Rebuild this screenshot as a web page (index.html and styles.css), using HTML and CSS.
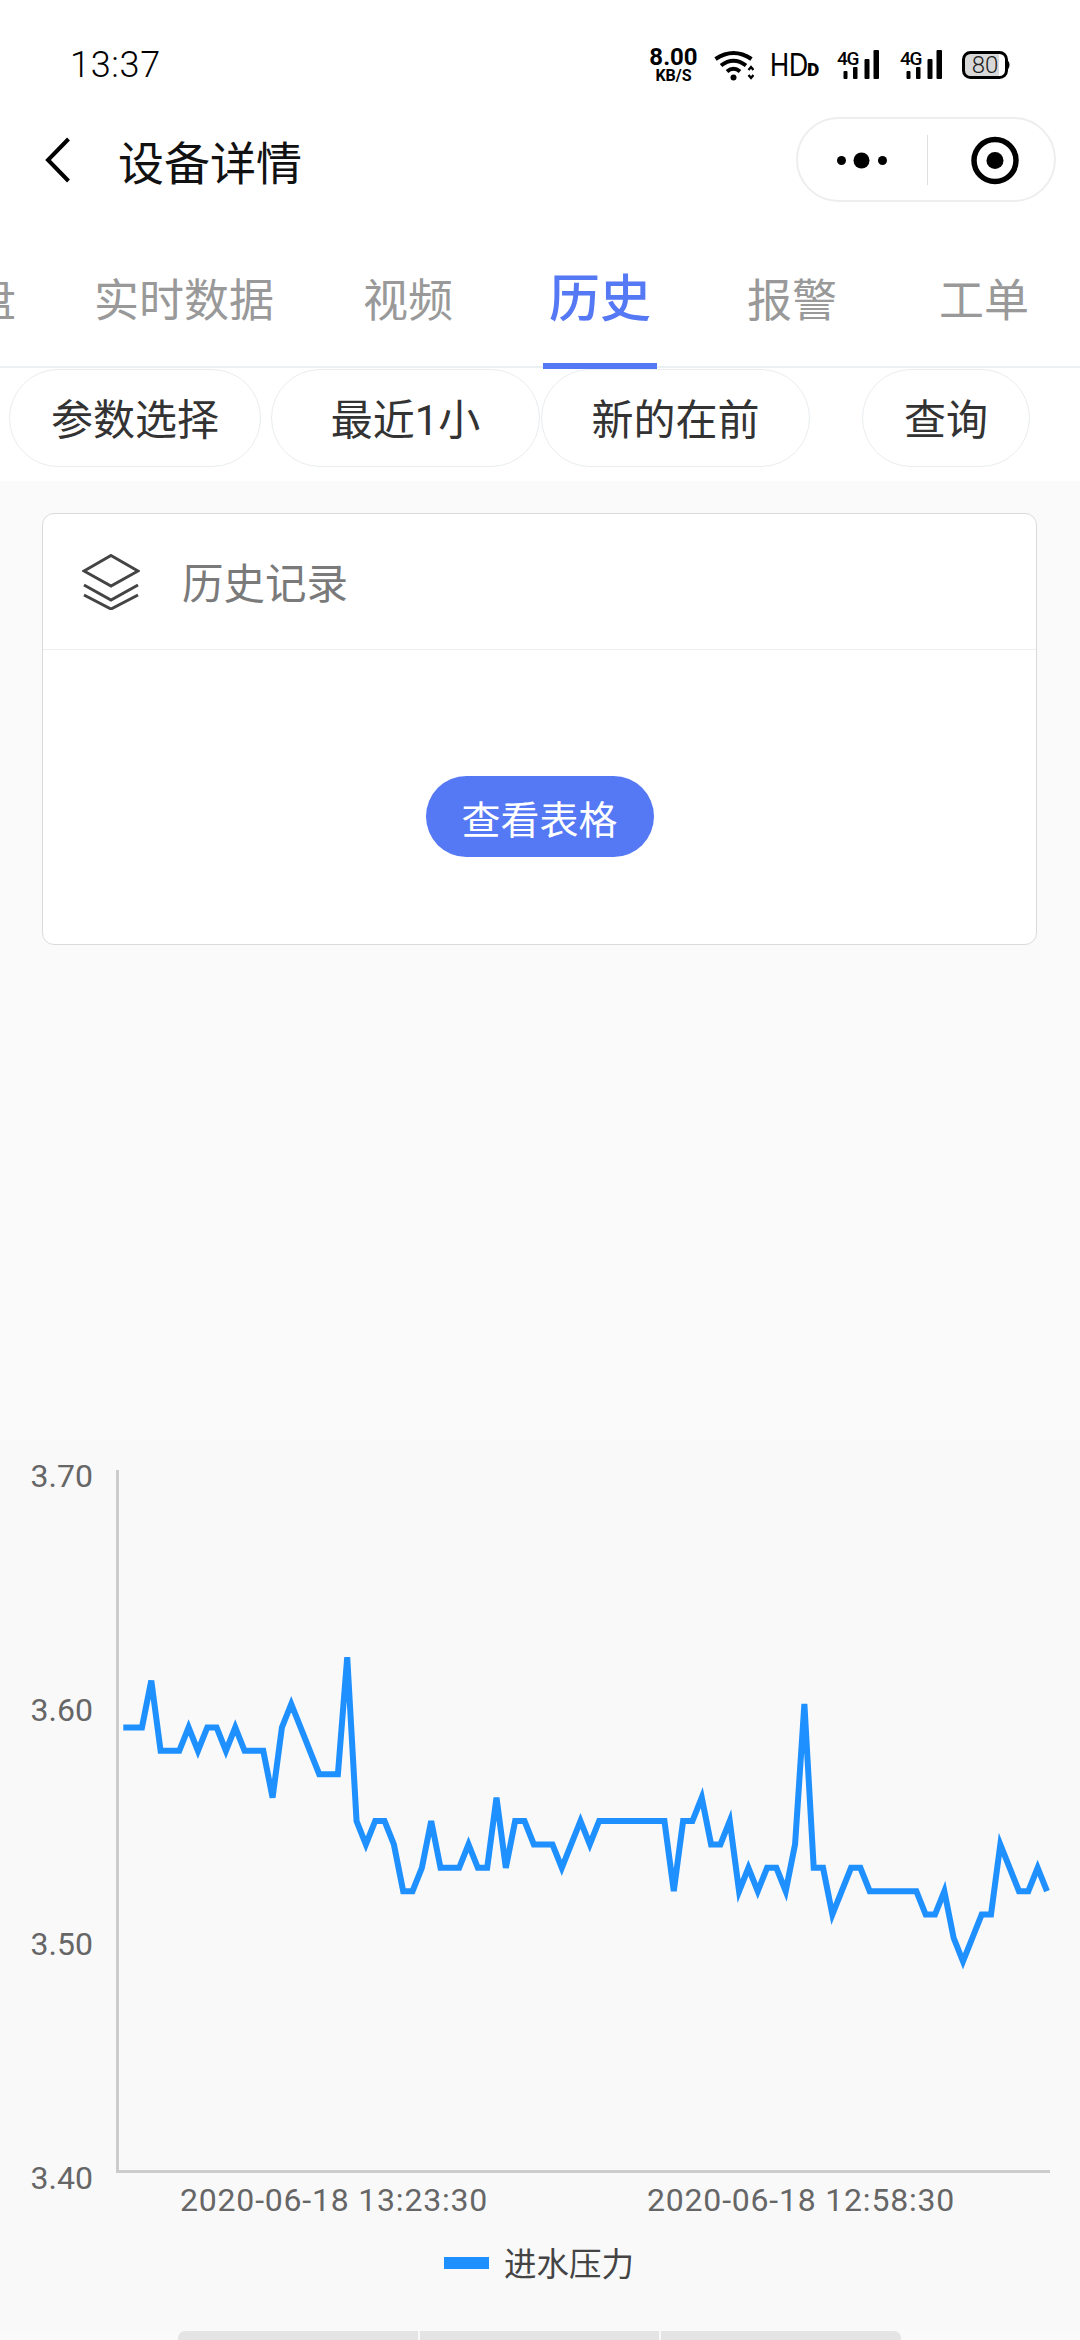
FILE: index.html
```html
<!DOCTYPE html>
<html lang="zh-CN">
<head>
<meta charset="utf-8">
<title>设备详情</title>
<link rel="stylesheet" href="styles.css">
</head>
<body>
<div class="page">
  <header class="top">
    <div class="status">
      <span class="time">13:37</span>
      <div class="status-icons">
        <div class="speed"><span class="speed-num">8.00</span><span class="speed-unit">KB/S</span></div>
        <svg class="ic-wifi" viewBox="0 0 40 32" width="40" height="32">
          <g class="wifi-arcs">
            <path d="M1.5 10Q19.5 -2 37.5 10"/>
            <path d="M7 16.5Q19.5 7 32 16.5"/>
            <path d="M13 22.5Q19.5 17 26 22.5"/>
          </g>
          <circle cx="19.5" cy="28.5" r="3"/>
          <path class="wifi-arrows" d="M34.5 21L37 18L39.5 21M34.5 26L37 29L39.5 26"/>
        </svg>
        <div class="hd"><span class="hd-big">HD</span><span class="hd-small">D</span></div>
        <svg class="ic-signal" viewBox="0 -5 46 35" width="46" height="35">
          <text class="sig-text" x="1" y="15">4G</text>
          <rect x="7.5" y="21" width="4" height="8" rx="1"/><rect x="17" y="17" width="4.5" height="12" rx="1"/><rect x="28.5" y="9" width="5" height="20" rx="1"/><rect x="37.5" y="0" width="5.5" height="29" rx="1"/>
        </svg>
        <svg class="ic-signal" viewBox="0 -5 46 35" width="46" height="35">
          <text class="sig-text" x="1" y="15">4G</text>
          <rect x="7.5" y="21" width="4" height="8" rx="1"/><rect x="17" y="17" width="4.5" height="12" rx="1"/><rect x="28.5" y="9" width="5" height="20" rx="1"/><rect x="37.5" y="0" width="5.5" height="29" rx="1"/>
        </svg>
        <svg class="ic-battery" viewBox="0 0 49 28" width="49" height="28">
          <rect class="bat-fill" x="3" y="3" width="34" height="22"/>
          <rect class="bat-body" x="1.5" y="1.5" width="43" height="25" rx="7"/>
          <path class="bat-nub" d="M46 9.5Q49 14 46 18.5Z"/>
          <text class="bat-text" x="23" y="22">80</text>
        </svg>
      </div>
    </div>
    <nav class="nav">
      <svg class="ic-back" viewBox="0 0 25 46" width="25" height="46"><path d="M23.5 2L3 23L23.5 44"/></svg>
      <h1 class="title">设备详情</h1>
      <div class="capsule">
        <svg class="cap-half" viewBox="0 0 129 81" width="129" height="81"><circle cx="43.5" cy="41.5" r="4.5"/><circle cx="63.5" cy="41.5" r="8"/><circle cx="84.5" cy="41.5" r="4.5"/></svg>
        <span class="cap-div"></span>
        <svg class="cap-half" viewBox="0 0 129 81" width="129" height="81"><circle class="target-ring" cx="67" cy="41.5" r="21"/><circle cx="67" cy="41.5" r="8.5"/></svg>
      </div>
    </nav>
    <div class="tabs">
      <div class="tab tab-wide tab-cut">盘</div>
      <div class="tab tab-wide">实时数据</div>
      <div class="tab">视频</div>
      <div class="tab tab-active">历史</div>
      <div class="tab">报警</div>
      <div class="tab">工单</div>
    </div>
    <div class="filters">
      <div class="pill pill-a">参数选择</div>
      <div class="pill pill-b">最近1小</div>
      <div class="pill pill-c">新的在前</div>
      <div class="pill pill-d">查询</div>
    </div>
  </header>

  <section class="card">
    <div class="card-head">
      <svg class="ic-layers" viewBox="0 0 58 56" width="58" height="56">
        <path d="M29 1.5L56 17L29 32L2 17Z"/>
        <path d="M2 31L29 46L56 31"/>
        <path d="M2 41L29 55L56 41"/>
      </svg>
      <span class="card-title">历史记录</span>
    </div>
    <div class="card-body"><button class="btn">查看表格</button></div>
  </section>

  <section class="chart">
    <svg class="chart-svg" viewBox="0 1440 1080 891" width="1080" height="891">
      <path class="axis" d="M117.5 1470V2171.5H1050"/>
      <text class="tick" x="30.5" y="1487">3.70</text>
      <text class="tick" x="30.5" y="1721">3.60</text>
      <text class="tick" x="30.5" y="1955">3.50</text>
      <text class="tick" x="30.5" y="2189">3.40</text>
      <text class="tick tick-x" x="180" y="2211">2020-06-18 13:23:30</text>
      <text class="tick tick-x" x="647" y="2211">2020-06-18 12:58:30</text>
      <polyline class="series" transform="translate(123.3 1470) scale(9.33 23.4)" points="0,11 1,11 2,11 3,9 4,12 5,12 6,12 7,11 8,12 9,11 10,11 11,12 12,11 13,12 14,12 15,12 16,14 17,11 18,10 19,11 20,12 21,13 22,13 23,13 24,8 25,15 26,16 27,15 28,15 29,16 30,18 31,18 32,17 33,15 34,17 35,17 36,17 37,16 38,17 39,17 40,14 41,17 42,15 43,15 44,16 45,16 46,16 47,17 48,16 49,15 50,16 51,15 52,15 53,15 54,15 55,15 56,15 57,15 58,15 59,18 60,15 61,15 62,14 63,16 64,16 65,15 66,18 67,17 68,18 69,17 70,17 71,18 72,16 73,10 74,17 75,17 76,19 77,18 78,17 79,17 80,18 81,18 82,18 83,18 84,18 85,18 86,19 87,19 88,18 89,20 90,21 91,20 92,19 93,19 94,16 95,17 96,18 97,18 98,17 99,18"/>
      <rect class="legend-key" x="444" y="2257" width="45" height="12"/>
      <text class="legend-label" x="504" y="2276">进水压力</text>
    </svg>
  </section>

  <div class="table-peek">
    <span class="peek-cell"></span>
    <span class="peek-cell"></span>
    <span class="peek-cell"></span>
  </div>
</div>
</body>
</html>
```

FILE: styles.css
```css
* { box-sizing: border-box; }
html, body { margin: 0; padding: 0; }
body {
  width: 1080px;
  height: 2340px;
  overflow: hidden;
  font-family: Roboto, "Noto Sans CJK SC", sans-serif;
  background: #fafafa;
}
.page { width: 1080px; height: 2340px; overflow: hidden; display: flex; flex-direction: column; }

.top { background: #fff; height: 481px; flex: none; }

/* status bar */
.status {
  height: 117px;
  padding: 13px 69px 0 70px;
  display: flex;
  align-items: center;
  justify-content: space-between;
  color: #000;
}
.time { font-size: 36px; line-height: 40px; font-weight: 300; color: #000; letter-spacing: .7px; }
.status-icons { display: flex; align-items: center; gap: 17px; height: 40px; }
.speed { width: 47px; display: flex; flex-direction: column; align-items: center; font-weight: 700; }
.speed-num { font-size: 24px; line-height: 21px; }
.speed-unit { font-size: 16px; line-height: 15px; }
.ic-wifi { fill: #000; }
.wifi-arcs { fill: none; stroke: #000; stroke-width: 4; }
.wifi-arrows { fill: none; stroke: #000; stroke-width: 2.4; }
.hd { width: 48px; height: 26px; display: flex; align-items: flex-end; }
.hd-big {
  font-size: 33px; line-height: 26px; font-weight: 400;
  display: inline-block; width: 36px;
  transform: scaleX(.8); transform-origin: left center;
  font-family: "Liberation Sans", sans-serif;
  margin-left: -1px;
}
.hd-small { font-size: 19px; line-height: 16px; font-weight: 900; margin-left: 1px; }
.ic-signal { fill: #000; margin-top: -5px; }
.sig-text { font-size: 19px; font-weight: 500; letter-spacing: -1.2px; font-family: Roboto, sans-serif; }
.bat-fill { fill: #d8d8d8; }
.bat-body { fill: none; stroke: #000; stroke-width: 3; }
.bat-nub { fill: #000; }
.bat-text { font-size: 24px; font-weight: 300; text-anchor: middle; fill: #222; }

/* navigation */
.nav { height: 85px; display: flex; align-items: center; padding: 0 24px 0 45px; }
.ic-back { fill: none; stroke: #000; stroke-width: 4; flex: none; }
.title { margin: 0 0 0 48px; font-size: 46px; line-height: 60px; font-weight: 400; color: #111; font-family: "Noto Sans CJK SC", sans-serif; }
.capsule {
  margin-left: auto;
  width: 260px;
  height: 85px;
  border: 2px solid #eeeeee;
  border-radius: 43px;
  display: flex;
  align-items: center;
  background: #fff;
}
.cap-half { flex: none; fill: #000; }
.cap-div { width: 1px; height: 50px; background: #dedede; flex: none; }
.target-ring { fill: none; stroke: #000; stroke-width: 5.5; }

/* tabs */
.tabs {
  height: 166px;
  display: flex;
  margin-left: -200px;
  width: 1280px;
  border-bottom: 2px solid #edf0f3;
}
.tab {
  flex: 0 0 192px;
  height: 164px;
  padding-top: 65px;
  text-align: center;
  font-size: 45px;
  line-height: 62px;
  color: #999;
  font-family: "Noto Sans CJK SC", sans-serif;
  position: relative;
}
.tab-wide { flex-basis: 256px; }
.tab-cut { text-align: right; padding-right: 40px; }
.tab-active { color: #5578f5; font-size: 51px; font-weight: 500; padding-top: 62px; }
.tab-active::after {
  content: "";
  position: absolute;
  left: 39px;
  width: 114px;
  top: 161px;
  height: 6px;
  background: #5578f5;
}

/* filter pills */
.filters { display: flex; padding: 1px 0 0 9px; height: 113px; }
.pill {
  height: 98px;
  padding-bottom: 3px;
  border: 1.5px solid #e9edf0;
  border-radius: 49px;
  display: flex;
  align-items: center;
  justify-content: center;
  font-size: 42px;
  color: #333;
  flex: none;
  font-family: Roboto, "Noto Sans CJK SC", sans-serif;
}
.pill-a { width: 252px; }
.pill-b { width: 269px; margin-left: 10px; }
.pill-c { width: 269px; margin-left: 1px; }
.pill-d { width: 168px; margin-left: 52px; }

/* card */
.card {
  flex: none;
  margin: 32px 43px 0 42px;
  height: 432px;
  background: #fff;
  border: 1.5px solid #dadada;
  border-radius: 12px;
  display: flex;
  flex-direction: column;
}
.card-head {
  height: 136px;
  flex: none;
  border-bottom: 1.5px solid #eeeeee;
  display: flex;
  align-items: center;
  padding-left: 39px;
}
.ic-layers { fill: none; stroke: #444; stroke-width: 3; flex: none; }
.card-title { margin-left: 42px; font-size: 41.5px; margin-bottom: 2px; color: #7a7a7a; font-family: "Noto Sans CJK SC", sans-serif; }
.card-body { flex: 1; display: flex; justify-content: center; padding-top: 126px; }
.btn {
  width: 228px;
  height: 81px;
  border: 0;
  border-radius: 41px;
  background: #5578f5;
  color: #fff;
  font-size: 39px;
  font-family: "Noto Sans CJK SC", sans-serif;
  padding: 0;
}

/* chart */
.chart { flex: none; margin-top: 495px; height: 891px; background: #f9f9fa; }
.chart-svg { display: block; }
.axis { fill: none; stroke: #cccccc; stroke-width: 3; }
.tick { font-size: 32px; fill: #666; font-family: Roboto, sans-serif; }
.tick-x { letter-spacing: .8px; }
.series { fill: none; stroke: #1e90ff; stroke-width: 6; vector-effect: non-scaling-stroke; stroke-linejoin: miter; stroke-miterlimit: 4; }
.legend-key { fill: #1e90ff; }
.legend-label { font-size: 32.5px; fill: #444; font-family: "Noto Sans CJK SC", sans-serif; }

/* table peeking from below */
.table-peek { flex: none; height: 9px; margin: 0 179px 0 178px; display: flex; gap: 2px; background: #f9f9fa; border-radius: 7px 7px 0 0; overflow: hidden; }
.peek-cell { flex: 1; background: #e4e4e4; }
```
